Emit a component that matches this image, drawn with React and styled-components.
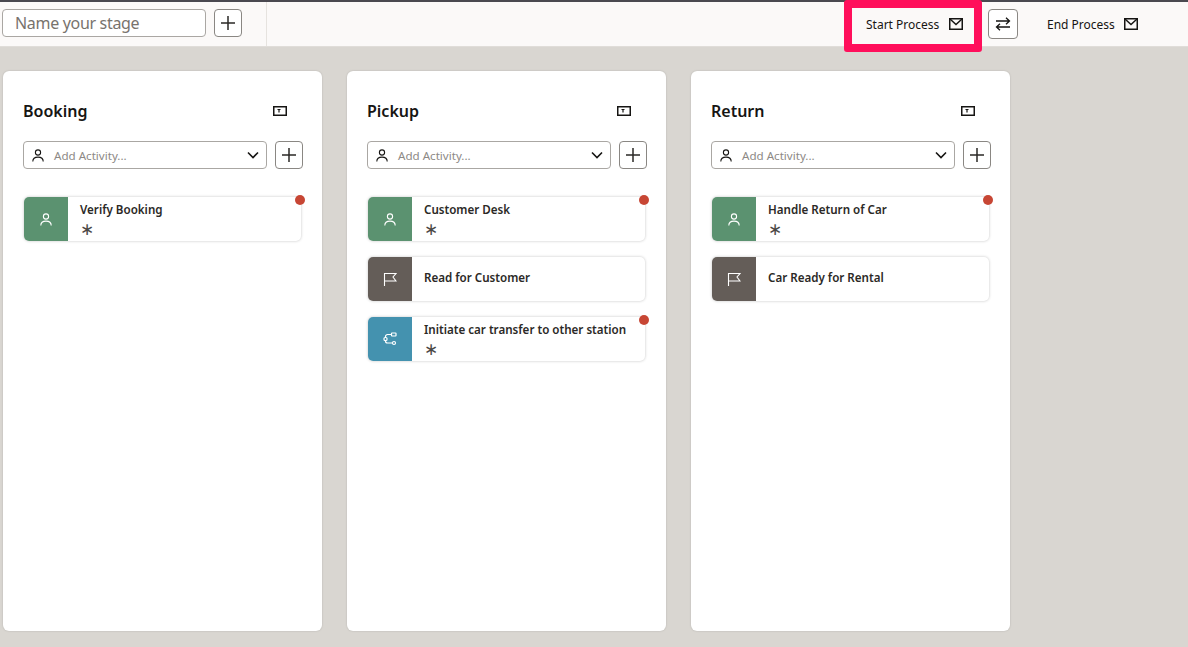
import React from "react";
import styled, { createGlobalStyle } from "styled-components";

const GlobalStyle = createGlobalStyle`
  html, body {
    margin: 0;
    height: 100%;
    background: #d9d6d1;
    font-family: "Noto Sans", "Open Sans", sans-serif;
    overflow: hidden;
  }
`;

const stages = [
  {
    name: "Booking",
    activities: [{ label: "Verify Booking", kind: "human", flagged: true }],
  },
  {
    name: "Pickup",
    activities: [
      { label: "Customer Desk", kind: "human", flagged: true },
      { label: "Read for Customer", kind: "milestone" },
      { label: "Initiate car transfer to other station", kind: "process", flagged: true },
    ],
  },
  {
    name: "Return",
    activities: [
      { label: "Handle Return of Car", kind: "human", flagged: true },
      { label: "Car Ready for Rental", kind: "milestone" },
    ],
  },
];

const kindColors = {
  human: "#5b9270",
  milestone: "#645d58",
  process: "#4492af",
};

const PlusIcon = () => (
  <svg width="16" height="16" viewBox="0 0 16 16" fill="none" stroke="#2b2926" strokeWidth="1.5">
    <path d="M8 1v14M1 8h14" />
  </svg>
);

const MailIcon = () => (
  <svg width="14" height="12" viewBox="0 0 14 12" fill="none" stroke="#161513" strokeWidth="1.5">
    <rect x="0.75" y="0.75" width="12.5" height="10.5" />
    <path d="M1 1l6 5.5L13 1" />
  </svg>
);

const SwapIcon = () => (
  <svg width="16" height="14" viewBox="0 0 16 14" fill="none" stroke="#161513" strokeWidth="1.3">
    <path d="M1 4h13.5M11 .8L14.5 4 11 7.2M15 10H1.5M5 6.8L1.5 10 5 13.2" />
  </svg>
);

const TextTagIcon = () => (
  <svg width="14" height="10" viewBox="0 0 14 10" fill="none" stroke="#161513">
    <rect x="0.75" y="0.75" width="12.5" height="8.5" strokeWidth="1.5" />
    <path d="M4.5 3.5h3M6 3.5v3" strokeWidth="1.2" />
  </svg>
);

const PersonIcon = ({ color = "#161513" }) => (
  <svg width="12" height="13" viewBox="0 0 12 13" fill="none" stroke={color} strokeWidth="1.1">
    <circle cx="6" cy="3.5" r="2.6" />
    <path d="M.8 12.5c0-3 2.2-4.4 5.2-4.4s5.2 1.4 5.2 4.4" />
  </svg>
);

const FlagIcon = () => (
  <svg width="14" height="14" viewBox="0 0 14 14" fill="none" stroke="#fff" strokeWidth="1.1">
    <path d="M1.5 14V1.5h11.5L10 5l3 4H1.5" />
  </svg>
);

const ProcessIcon = () => (
  <svg width="14" height="14" viewBox="0 0 14 14" fill="none" stroke="#fff" strokeWidth="1.2">
    <rect x="8.5" y="1" width="4.5" height="3" rx="0.5" />
    <rect x="1" y="5.5" width="3" height="3" rx="1" />
    <circle cx="11" cy="11" r="1.5" />
    <path d="M8.5 2.5H4.5a2 2 0 0 0-2 2v1M2.500 8.500v.5a2 2 0 0 0 2 2h5" />
  </svg>
);

const ChevronIcon = () => (
  <svg width="12" height="8" viewBox="0 0 12 8" fill="none" stroke="#161513" strokeWidth="1.6">
    <path d="M1 1.5l5 5 5-5" />
  </svg>
);

const kindIcons = {
  human: <PersonIcon color="#fff" />,
  milestone: <FlagIcon />,
  process: <ProcessIcon />,
};

const Page = styled.div`
  height: 647px;
  display: flex;
  flex-direction: column;
`;

const Toolbar = styled.header`
  position: relative;
  box-sizing: border-box;
  height: 47px;
  flex: none;
  display: flex;
  align-items: flex-start;
  background: #fbf9f8;
  border-top: 2px solid #4a4950;
  border-bottom: 1px solid #e0ddd9;
`;

const StageForm = styled.div`
  box-sizing: border-box;
  width: 267px;
  height: 44px;
  padding: 7px 0 0 2px;
  display: flex;
  gap: 8px;
  border-right: 1px solid #e6e3df;
`;

const NameField = styled.div`
  box-sizing: border-box;
  width: 204px;
  height: 28px;
  padding-left: 12px;
  display: flex;
  align-items: center;
  border: 1px solid #aaa7a3;
  border-radius: 4px;
  background: #fff;
  color: #78736d;
  font-size: 16px;
  letter-spacing: -0.32px;
`;

const IconButton = styled.div`
  box-sizing: border-box;
  width: ${(p) => p.$width || 28}px;
  height: ${(p) => p.$height || 28}px;
  flex: none;
  display: flex;
  align-items: center;
  justify-content: center;
  border: 1px solid #8a8783;
  border-radius: 4px;
  background: #fff;
`;

const EventGroup = styled.div`
  margin-left: auto;
  margin-right: 49px;
  padding-top: 7px;
  display: flex;
  align-items: flex-start;
`;

const EventLabel = styled.div`
  height: 30px;
  width: ${(p) => p.$width}px;
  padding-left: ${(p) => p.$pad}px;
  box-sizing: border-box;
  display: flex;
  align-items: center;
  gap: ${(p) => p.$gap}px;
  color: #161513;
  font-size: 12px;
`;

const Highlight = styled.div`
  position: absolute;
  left: 844px;
  top: -2px;
  box-sizing: border-box;
  width: 138px;
  height: 52px;
  border: 8px solid #ff0f5b;
  border-radius: 3px;
`;

const Board = styled.main`
  flex: 1;
  padding: 24px 0 16px 3px;
  display: flex;
  gap: 25px;
  min-height: 0;
`;

const Column = styled.section`
  box-sizing: border-box;
  width: 319px;
  padding: 29px 19px 0 20px;
  background: #fff;
  border-radius: 6px;
  box-shadow: 0 0 2px rgba(0, 0, 0, 0.18);
`;

const ColumnHead = styled.div`
  height: 22px;
  padding-right: 16px;
  display: flex;
  align-items: center;
  justify-content: space-between;
`;

const ColumnTitle = styled.h2`
  margin: 0;
  color: #161513;
  font-size: 16px;
  font-weight: 600;
`;

const AddRow = styled.div`
  margin-top: 19px;
  display: flex;
  gap: 8px;
`;

const ActivitySelect = styled.div`
  box-sizing: border-box;
  width: 244px;
  height: 28px;
  padding: 0 7px 0 8px;
  display: flex;
  align-items: center;
  gap: 10px;
  border: 1px solid #aaa7a3;
  border-radius: 4px;
  color: #8d8985;
  font-size: 11.6px;
`;

const SelectText = styled.span`
  flex: 1;
`;

const ActivityList = styled.div`
  margin-top: 28px;
  padding-left: 1px;
  display: flex;
  flex-direction: column;
  gap: 16px;
`;

const Card = styled.div`
  position: relative;
  box-sizing: border-box;
  width: 277px;
  height: 44px;
  display: flex;
  border-radius: 5px;
  background: #fff;
  box-shadow: 0 0 3px rgba(0, 0, 0, 0.24);
`;

const CardIcon = styled.div`
  width: 44px;
  flex: none;
  display: flex;
  align-items: center;
  justify-content: center;
  border-radius: 5px 0 0 5px;
  background: ${(p) => kindColors[p.$kind]};
`;

const CardBody = styled.div`
  padding: ${(p) => (p.$flagged ? "4px 0 0 12px" : "0 0 3px 12px")};
  display: flex;
  flex-direction: column;
  justify-content: ${(p) => (p.$flagged ? "flex-start" : "center")};
`;

const CardLabel = styled.div`
  color: #2b2926;
  font-size: 11.6px;
  font-weight: 600;
  line-height: 17px;
  white-space: nowrap;
`;

const Required = styled.div`
  margin-top: 1px;
  color: #4a4845;
  font-size: 17px;
  line-height: 20px;
  height: 18px;
`;

const Dot = styled.span`
  position: absolute;
  top: -2px;
  right: -4px;
  width: 10px;
  height: 10px;
  border-radius: 50%;
  background: #c74634;
`;

const App = () => (
  <Page>
    <GlobalStyle />
    <Toolbar>
      <StageForm>
        <NameField>Name your stage</NameField>
        <IconButton>
          <PlusIcon />
        </IconButton>
      </StageForm>
      <EventGroup>
        <EventLabel $width={122} $pad={0} $gap={10}>
          Start Process <MailIcon />
        </EventLabel>
        <IconButton $width={30} $height={30}>
          <SwapIcon />
        </IconButton>
        <EventLabel $width={121} $pad={29} $gap={9}>
          End Process <MailIcon />
        </EventLabel>
      </EventGroup>
      <Highlight />
    </Toolbar>
    <Board>
      {stages.map((stage) => (
        <Column key={stage.name}>
          <ColumnHead>
            <ColumnTitle>{stage.name}</ColumnTitle>
            <TextTagIcon />
          </ColumnHead>
          <AddRow>
            <ActivitySelect>
              <PersonIcon />
              <SelectText>Add Activity...</SelectText>
              <ChevronIcon />
            </ActivitySelect>
            <IconButton>
              <PlusIcon />
            </IconButton>
          </AddRow>
          <ActivityList>
            {stage.activities.map((activity) => (
              <Card key={activity.label}>
                <CardIcon $kind={activity.kind}>{kindIcons[activity.kind]}</CardIcon>
                <CardBody $flagged={activity.flagged}>
                  <CardLabel>{activity.label}</CardLabel>
                  {activity.flagged && <Required>∗</Required>}
                </CardBody>
                {activity.flagged && <Dot />}
              </Card>
            ))}
          </ActivityList>
        </Column>
      ))}
    </Board>
  </Page>
);

export default App;
